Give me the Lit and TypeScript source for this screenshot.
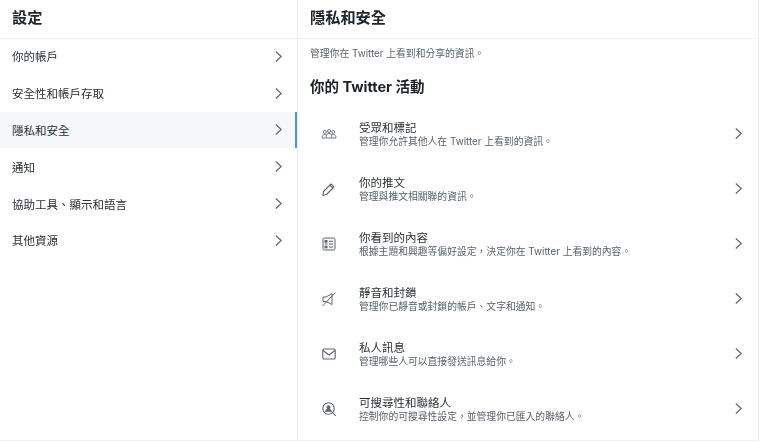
import { LitElement, html, css, svg } from "lit";
import { customElement } from "lit/decorators.js";

const chevron = html`<svg class="chev" viewBox="0 0 10 14" fill="none" stroke="#5f6670" stroke-width="1.3"><path d="M2 1.5 L8 7 L2 12.5"/></svg>`;

const icons = [
  svg`<g fill="none" stroke="#666d75" stroke-width="0.9"><circle cx="4.800" cy="7" r="1.500"/><circle cx="9" cy="6" r="1.500"/><circle cx="13.200" cy="7" r="1.500"/><path d="M2 13c0-2.200 1-3.500 2.800-3.500.8 0 1.400.2 1.900.5M6.200 12.500c0-2.600 1-4.200 2.800-4.200s2.800 1.600 2.800 4.200M11.300 10c.5-.3 1.100-.5 1.900-.5 1.800 0 2.800 1.300 2.800 3.500"/><path d="M2 13h14"/></g>`,
  svg`<g fill="none" stroke="#5f666e" stroke-width="1.100" stroke-linejoin="round"><path d="M3.500 11.500 11 4l3 3-7.500 7.500-3.500 1z"/><path d="M9.800 5.200l3 3"/></g>`,
  svg`<g fill="none" stroke="#5f666e" stroke-width="1"><rect x="3" y="3" width="12" height="12" rx="1.500" fill="#f2f3f4"/><path d="M9 6.300h4M9 9h4M9 12h4M5 9h2.500"/><rect x="5" y="5.500" width="2" height="1.600" fill="#5f666e"/><rect x="5" y="11.200" width="2" height="1.600" fill="#5f666e"/></g>`,
  svg`<g fill="none" stroke="#5f666e" stroke-width="1"><path d="M3 7h3l6-3.500v11L6 11.500H3z" /><path d="M2.500 16 15.500 2.500"/></g>`,
  svg`<g fill="none" stroke="#5f666e" stroke-width="1.100"><rect x="2.800" y="4" width="12.400" height="10" rx="1.300"/><path d="M3 5.500 9 10l6-4.500"/></g>`,
  svg`<g fill="none" stroke="#5f666e" stroke-width="1.100"><circle cx="8.500" cy="8.500" r="5.700"/><path d="M12.700 12.700 15.800 15.800"/><circle cx="8.500" cy="7.200" r="1.500" fill="#5f666e"/><path d="M5.600 11.300c.5-1.500 1.500-2 2.900-2s2.400.5 2.900 2z" fill="#5f666e"/></g>`,
];

const left = ["你的帳戶", "安全性和帳戶存取", "隱私和安全", "通知", "協助工具、顯示和語言", "其他資源"];
const rows = [
  ["受眾和標記", "管理你允許其他人在 Twitter 上看到的資訊。"],
  ["你的推文", "管理與推文相關聯的資訊。"],
  ["你看到的內容", "根據主題和興趣等偏好設定，決定你在 Twitter 上看到的內容。"],
  ["靜音和封鎖", "管理你已靜音或封鎖的帳戶、文字和通知。"],
  ["私人訊息", "管理哪些人可以直接發送訊息給你。"],
  ["可搜尋性和聯絡人", "控制你的可搜尋性設定，並管理你已匯入的聯絡人。"],
];

const rich = (s: string) =>
  s.split(/( ?Twitter ?)/).map((p) => (p.includes("Twitter") ? html`<span class="lat">${p}</span>` : p));

@customElement("app-root")
export class AppRoot extends LitElement {
  static styles = css`
    :host {
      display: block;
      width: 768px;
      height: 442px;
      overflow: hidden;
      background: #fff;
      color: #1f2429;
      font-family: "Noto Sans CJK TC", sans-serif;
      font-feature-settings: "locl" 1;
    }
    .lat { font-family: Inter, "Liberation Sans", sans-serif; white-space: pre; }
    .page {
      display: grid;
      grid-template-columns: 298px 461px;
      height: 441px;
      width: 759px;
      border-bottom: 1px solid #eff1f2;
      box-sizing: border-box;
      filter: blur(0.3px);
    }
    .pane-left { border-right: 1px solid #e9ebec; }
    .pane-right { border-right: 1px solid #e9ebec; }
    .head {
      height: 39px;
      box-sizing: border-box;
      border-bottom: 1px solid #eff1f2;
      display: flex;
      align-items: center;
      padding: 0 0 6px 12px;
      font-size: 15.200px;
      font-weight: 700;
      color: #22272c;
    }
    .list { margin-top: -1px; }
    .lrow {
      height: 36.800px;
      display: flex;
      align-items: center;
      justify-content: space-between;
      padding: 0 14px 0 12px;
      font-size: 11.500px;
      color: #2b3035;
      position: relative;
    }
    .lrow span { line-height: 14px; }
    .lrow.sel { background: #f5f7f8; }
    .lrow.sel::after {
      content: "";
      position: absolute;
      right: 0;
      top: 0;
      bottom: 0;
      width: 2px;
      background: #4f94d4;
    }
    .chev { width: 9px; height: 13px; flex: none; }
    .sub {
      padding: 8px 0 0 12px;
      font-size: 9.800px;
      line-height: 13px;
      color: #59616a;
    }
    h2 {
      margin: 16px 0 0 12px;
      font-size: 14.500px;
      line-height: 20px;
      font-weight: 700;
      color: #1d2125;
    }
    .rows { margin-top: 9px; display: flex; flex-direction: column; }
    .rrow {
      height: 55px;
      display: flex;
      align-items: center;
      padding: 0 15px 0 22px;
    }
    .ico { width: 18px; height: 18px; flex: none; margin-right: 21px; }
    .txt { flex: 1; display: flex; flex-direction: column; padding-top: 1px; }
    .t { font-size: 11.500px; line-height: 14px; color: #2b3035; }
    .d { font-size: 9.800px; line-height: 14px; color: #59616a; }
  `;

  render() {
    return html`<div class="page" lang="zh-Hant">
      <section class="pane-left">
        <div class="head">設定</div>
        <div class="list">
          ${left.map((l, i) => html`<div class="lrow ${i === 2 ? "sel" : ""}"><span>${l}</span>${chevron}</div>`)}
        </div>
      </section>
      <section class="pane-right">
        <div class="head">隱私和安全</div>
        <div class="sub">${rich("管理你在 Twitter 上看到和分享的資訊。")}</div>
        <h2>${rich("你的 Twitter 活動")}</h2>
        <div class="rows">
          ${rows.map(
            (r, i) => html`<div class="rrow">
              <svg class="ico" viewBox="0 0 18 18">${icons[i]}</svg>
              <div class="txt"><div class="t">${r[0]}</div><div class="d">${rich(r[1])}</div></div>
              ${chevron}
            </div>`
          )}
        </div>
      </section>
    </div>`;
  }
}
